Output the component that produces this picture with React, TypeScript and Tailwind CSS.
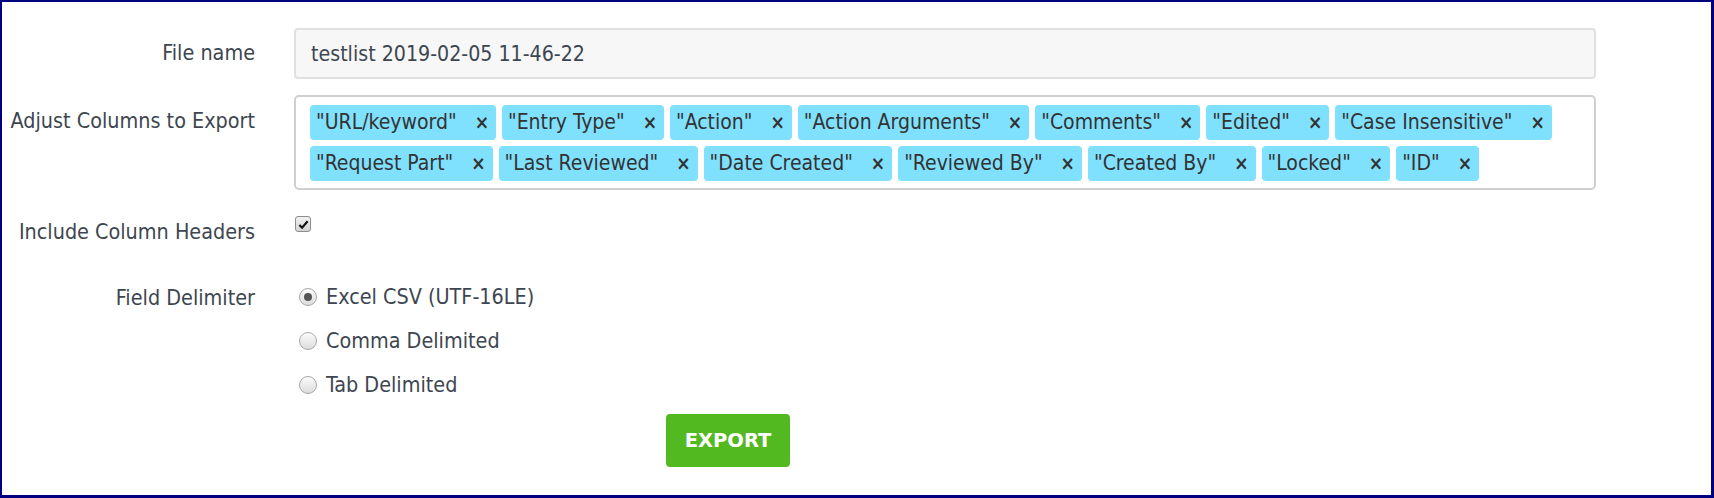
import React from 'react';

const columns = [
  'URL/keyword',
  'Entry Type',
  'Action',
  'Action Arguments',
  'Comments',
  'Edited',
  'Case Insensitive',
  'Request Part',
  'Last Reviewed',
  'Date Created',
  'Reviewed By',
  'Created By',
  'Locked',
  'ID',
];

const delimiters = ['Excel CSV (UTF-16LE)', 'Comma Delimited', 'Tab Delimited'];

function Tag({ label }: { label: string }) {
  return (
    <span className="flex h-[35px] items-center rounded-[4px] bg-[#80e1fe] pl-[6px] pr-[7px] text-[21px] text-[#333]">
      <span>"{label}"</span>
      <span className="ml-[18px] font-bold text-[19px] leading-none text-[#333]">×</span>
    </span>
  );
}

function Radio({ checked, label }: { checked?: boolean; label: string }) {
  return (
    <label className="flex h-[44px] items-center">
      <span className="ml-[5px] flex h-[18px] w-[18px] items-center justify-center rounded-full border border-[#a7a7a7] bg-gradient-to-b from-[#fbfbfb] to-[#dcdcdc] shadow-[inset_0_1px_1px_rgba(255,255,255,0.8)]">
        {checked && <span className="h-[8px] w-[8px] rounded-full bg-[#555]" />}
      </span>
      <span className="ml-[9px] text-[21.4px] text-[#3d4650]">{label}</span>
    </label>
  );
}

export default function App() {
  return (
    <div className="box-border h-[498px] w-[1714px] border-t-2 border-l-2 border-r-[3px] border-b-[3px] border-[#000080] bg-white font-['DejaVu_Sans_Condensed','Liberation_Sans',sans-serif] text-[#3d4650]">
      <div className="pt-[26px]">
        {/* file name */}
        <div className="flex items-center">
          <div className="w-[253px] text-right text-[21.4px]">File name</div>
          <div className="ml-[39px] flex h-[51px] w-[1302px] items-center rounded-[4px] border-2 border-[#e0e0e0] bg-[#f7f7f7] pl-[15px] text-[21.2px] text-[#3d4650]">
            testlist 2019-02-05 11-46-22
          </div>
        </div>

        {/* columns */}
        <div className="mt-[16px] flex items-start">
          <div className="w-[253px] pt-[10px] text-right text-[21.4px]">Adjust Columns to Export</div>
          <div className="ml-[39px] box-border w-[1302px] rounded-[5px] border-2 border-[#cfcfcf] px-[14px] pt-[8px] pb-[7px]">
            <div className="flex flex-wrap gap-x-[6px] gap-y-[6px]">
              {columns.map((c) => (
                <Tag key={c} label={c} />
              ))}
            </div>
          </div>
        </div>

        {/* headers */}
        <div className="mt-[26px] flex items-start">
          <div className="w-[253px] pt-[1px] text-right text-[21.4px] leading-[30px]">Include Column Headers</div>
          <div className="ml-[39px] pl-[1px]">
            <span className="flex h-[16px] w-[16px] items-center justify-center rounded-[3px] border border-[#8e8e8e] bg-gradient-to-b from-[#f2f2f2] to-[#d3d3d3]">
              <svg viewBox="0 0 12 12" className="h-[11px] w-[11px]">
                <path d="M1.5 6.5 L4.5 9.5 L10.5 2.5" fill="none" stroke="#111" strokeWidth="2.4" strokeLinejoin="miter" />
              </svg>
            </span>
          </div>
        </div>

        {/* delimiter */}
        <div className="mt-[28px] flex items-start">
          <div className="flex h-[44px] w-[253px] items-center justify-end pt-[3px] text-[21.4px]">Field Delimiter</div>
          <div className="ml-[39px] flex flex-col">
            {delimiters.map((d, i) => (
              <Radio key={d} label={d} checked={i === 0} />
            ))}
          </div>
        </div>

        <div className="mt-[7px] pl-[664px]">
          <button className="h-[53px] w-[124px] rounded-[4px] bg-[#53b920] font-['DejaVu_Sans','Liberation_Sans',sans-serif] text-[19.5px] font-bold text-white">
            EXPORT
          </button>
        </div>
      </div>
    </div>
  );
}
